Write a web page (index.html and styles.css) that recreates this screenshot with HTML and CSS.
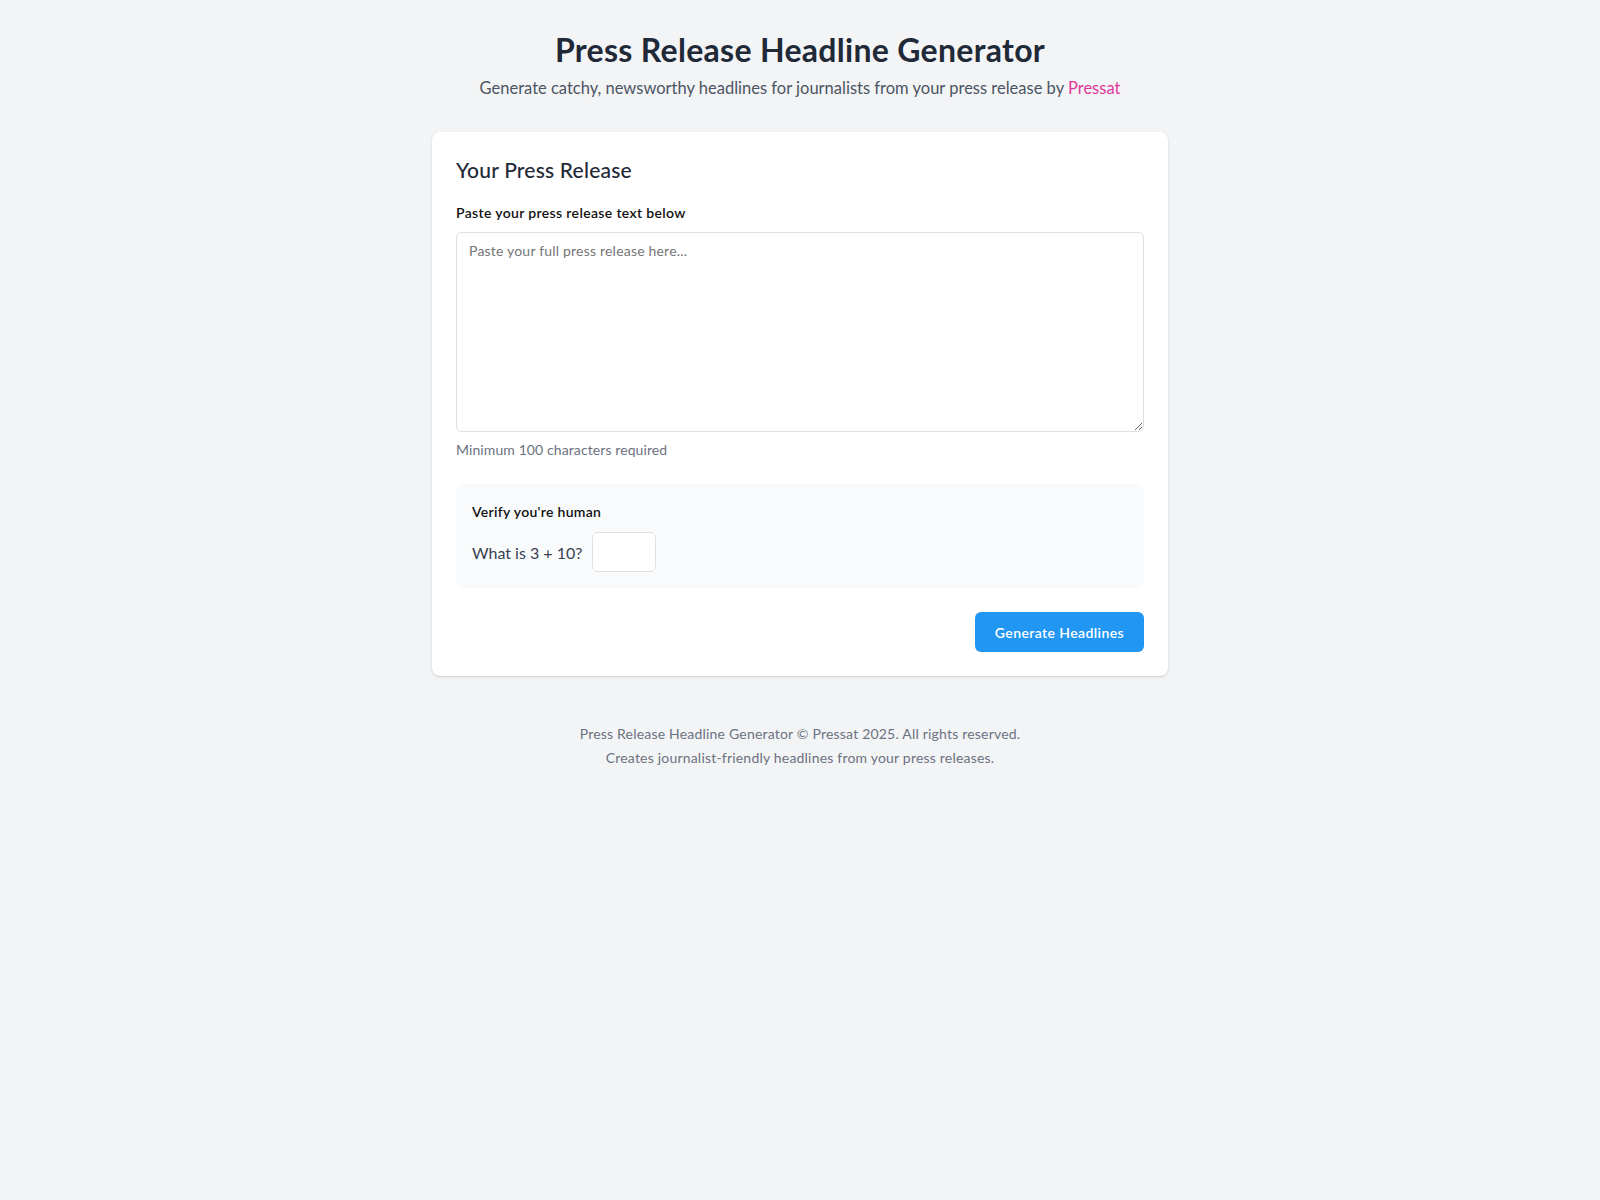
FILE: index.html
```html
<!DOCTYPE html>
<html lang="en">
<head>
<meta charset="utf-8">
<title>Press Release Headline Generator</title>
<link rel="stylesheet" href="styles.css">
</head>
<body>
<div class="container">
  <header class="page-header">
    <h1 class="title">Press Release Headline Generator</h1>
    <p class="subtitle">Generate catchy, newsworthy headlines for journalists from your press release by <a class="brand" href="#">Pressat</a></p>
  </header>

  <main class="card">
    <h2 class="card-title">Your Press Release</h2>
    <form class="form">
      <label class="label" for="release">Paste your press release text below</label>
      <textarea id="release" class="textarea" placeholder="Paste your full press release here..."></textarea>
      <p class="hint">Minimum 100 characters required</p>

      <div class="verify">
        <div class="verify-title">Verify you're human</div>
        <div class="verify-row">
          <span class="question">What is 3 + 10?</span>
          <input class="answer" type="text">
        </div>
      </div>

      <div class="actions">
        <button class="btn" type="button">Generate Headlines</button>
      </div>
    </form>
  </main>

  <footer class="footer">
    <p>Press Release Headline Generator © Pressat 2025. All rights reserved.</p>
    <p>Creates journalist-friendly headlines from your press releases.</p>
  </footer>
</div>
</body>
</html>
```

FILE: styles.css
```css
* { box-sizing: border-box; }

html, body {
  margin: 0;
  padding: 0;
  background: #f3f4f6;
  font-family: "Lato", "Noto Sans", sans-serif;
  color: #1f2937;
}

.container {
  max-width: 768px;
  margin: 0 auto;
  padding: 32px 16px;
}

.page-header {
  text-align: center;
  margin-bottom: 30px;
}

.title {
  margin: 0 0 6px;
  font-size: 32px;
  line-height: 36px;
  font-weight: 700;
  letter-spacing: 0.3px;
  color: #1f2937;
}

.subtitle {
  margin: 0;
  font-size: 16.5px;
  line-height: 28px;
  color: #4b5563;
}

.brand {
  color: #df389b;
  text-decoration: none;
}

.card {
  background: #fff;
  border-radius: 8px;
  box-shadow: 0 1px 3px rgba(0,0,0,0.1), 0 1px 2px rgba(0,0,0,0.06);
  padding: 24px;
}

.card-title {
  margin: 0 0 19px;
  font-size: 21px;
  line-height: 28px;
  font-weight: 500;
  letter-spacing: 0.2px;
  color: #1f2937;
}

.form {
  display: flex;
  flex-direction: column;
}

.label {
  font-size: 14px;
  line-height: 20px;
  font-weight: 600;
  letter-spacing: 0.35px;
  color: #111;
  margin-bottom: 9px;
}

.textarea {
  display: block;
  width: 100%;
  height: 200px;
  padding: 8px 12px;
  border: 1px solid #e0e0e0;
  border-radius: 6px;
  font-family: inherit;
  font-size: 14px;
  line-height: 20px;
  color: #111;
  resize: vertical;
}
.textarea::placeholder { color: #757575; letter-spacing: 0.2px; }

.hint {
  margin: 8px 0 0;
  font-size: 14px;
  line-height: 20px;
  letter-spacing: 0.1px;
  color: #6b7280;
}

.verify {
  margin-top: 24px;
  background: #f9fafb;
  border-radius: 6px;
  padding: 16px;
}

.verify-title {
  font-size: 14px;
  line-height: 24px;
  font-weight: 600;
  letter-spacing: 0.3px;
  color: #111;
  margin-bottom: 8px;
}

.verify-row {
  display: flex;
  align-items: center;
  gap: 10px;
}

.question {
  font-size: 16px;
  color: #374151;
}

.answer {
  width: 64px;
  height: 40px;
  border: 1px solid #e0e0e0;
  border-radius: 6px;
  background: #fff;
  font-family: inherit;
  font-size: 16px;
  padding: 0 8px;
}

.actions {
  display: flex;
  justify-content: flex-end;
  margin-top: 24px;
}

.btn {
  background: #2196f3;
  color: #fff;
  border: none;
  border-radius: 6px;
  height: 40px;
  padding: 0 20px;
  font-family: inherit;
  font-size: 14px;
  font-weight: 600;
  letter-spacing: 0.4px;
  cursor: pointer;
}

.footer {
  margin-top: 46px;
  text-align: center;
  font-size: 14px;
  letter-spacing: 0.2px;
  color: #6b7280;
}
.footer p {
  margin: 0;
  line-height: 24px;
}
```
